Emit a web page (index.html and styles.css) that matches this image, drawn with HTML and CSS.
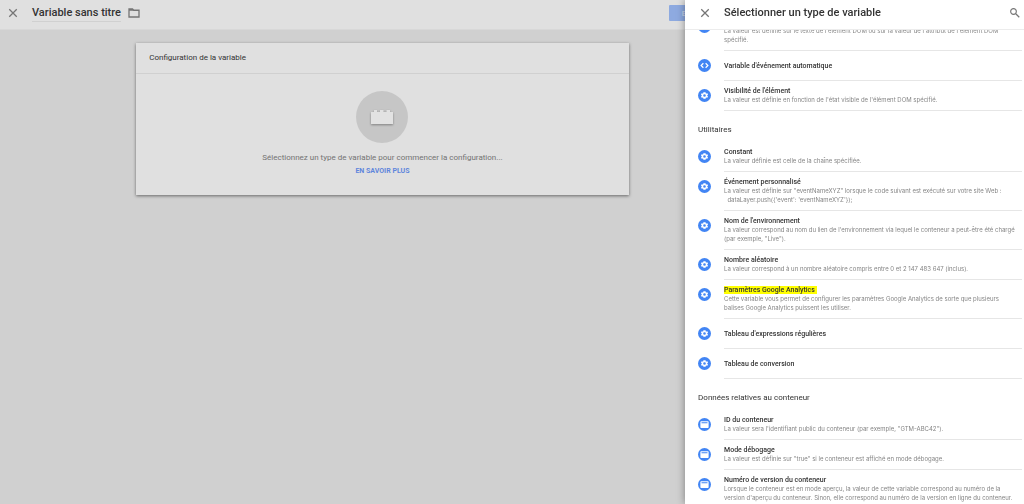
FILE: index.html
```html
<!DOCTYPE html>
<html lang="fr">
<head>
<meta charset="utf-8">
<title>Variable sans titre</title>
<link rel="stylesheet" href="styles.css">
</head>
<body>
<svg class="sprite" aria-hidden="true">
  <symbol id="close" viewBox="0 0 24 24"><path d="M3 3L21 21M21 3L3 21" fill="none" stroke="currentColor" stroke-width="3"/></symbol>
  <symbol id="gear" viewBox="0 0 24 24"><path fill="currentColor" fill-rule="evenodd" d="M19.4 13c.1-.7.1-1.300 0-2l2.100-1.600-2-3.500-2.500 1a8 8 0 0 0-1.700-1L15 3.200H9l-.4 2.700a8 8 0 0 0-1.700 1l-2.400-1-2 3.500L4.600 11a8 8 0 0 0 0 2l-2.100 1.600 2 3.500 2.400-1a8 8 0 0 0 1.700 1l.4 2.700h6l.3-2.700a8 8 0 0 0 1.700-1l2.500 1 2-3.500zM12 15.500a3.500 3.500 0 1 1 0-7 3.500 3.500 0 0 1 0 7z"/></symbol>
  <symbol id="code" viewBox="0 0 24 24"><path d="M9 6L3 12 9 18M15 6l6 6-6 6" fill="none" stroke="currentColor" stroke-width="3.200"/></symbol>
  <symbol id="box" viewBox="0 0 24 24"><path fill="currentColor" fill-rule="evenodd" d="M3 3H21A2 2 0 0 1 23 5V19A2 2 0 0 1 21 21H3A2 2 0 0 1 1 19V5A2 2 0 0 1 3 3zM4 6V8.500H20V6z"/></symbol>
</svg>

<div class="page">
  <header class="topbar">
    <button class="icon-button" aria-label="Fermer"><svg><use href="#close"/></svg></button>
    <h1 class="topbar-title">Variable sans titre</h1>
    <button class="folder-button" aria-label="Dossier"><svg viewBox="0 0 24 20"><path d="M2 2H9L11.500 4.500H22V18H2z" fill="none" stroke="currentColor" stroke-width="2.600"/><path d="M2 2H9L12 5.500H2z" fill="currentColor"/></svg></button>
    <button class="save">Enregistrer</button>
  </header>
  <main class="workspace">
    <section class="card">
      <h2 class="card-title">Configuration de la variable</h2>
      <div class="card-body">
        <div class="brick"><svg viewBox="0 0 22 14"><path d="M0 2H3V0H6V2H9V0H12.500V2H15.500V0H19V2H22V14H0z" fill="currentColor"/></svg></div>
        <p class="hint">Sélectionnez un type de variable pour commencer la configuration...</p>
        <a class="more" href="#">EN SAVOIR PLUS</a>
      </div>
    </section>
  </main>
</div>

<aside class="drawer">
  <header class="drawer-head">
    <button class="icon-button" aria-label="Fermer le panneau"><svg><use href="#close"/></svg></button>
    <h2 class="drawer-title">Sélectionner un type de variable</h2>
    <button class="search-button" aria-label="Rechercher"><svg viewBox="2 2 20 20"><circle cx="9" cy="9" r="5.700" fill="none" stroke="currentColor" stroke-width="2.200"/><path d="M13.500 13.500L20.500 20.500" stroke="currentColor" stroke-width="2.600"/></svg></button>
  </header>
  <div class="drawer-view">
    <div class="list">
      <div class="row row-clipped"><span class="badge"></span><div class="text"><p>La valeur est définie sur le texte de l'élément DOM ou sur la valeur de l'attribut de l'élément DOM spécifié.</p></div></div>
      <div class="row row-plain"><span class="badge"><svg><use href="#code"/></svg></span><div class="text"><h4>Variable d'événement automatique</h4></div></div>
      <div class="row"><span class="badge"><svg><use href="#gear"/></svg></span><div class="text"><h4>Visibilité de l'élément</h4><p>La valeur est définie en fonction de l'état visible de l'élément DOM spécifié.</p></div></div>

      <h3 class="group">Utilitaires</h3>
      <div class="row"><span class="badge"><svg><use href="#gear"/></svg></span><div class="text"><h4>Constant</h4><p>La valeur définie est celle de la chaîne spécifiée.</p></div></div>
      <div class="row"><span class="badge"><svg><use href="#gear"/></svg></span><div class="text"><h4>Événement personnalisé</h4><p>La valeur est définie sur "eventNameXYZ" lorsque le code suivant est exécuté sur votre site Web :<br>&nbsp; dataLayer.push({'event': 'eventNameXYZ'});</p></div></div>
      <div class="row"><span class="badge"><svg><use href="#gear"/></svg></span><div class="text"><h4>Nom de l'environnement</h4><p>La valeur correspond au nom du lien de l'environnement via lequel le conteneur a peut-être été chargé (par&nbsp;exemple, "Live").</p></div></div>
      <div class="row"><span class="badge"><svg><use href="#gear"/></svg></span><div class="text"><h4>Nombre aléatoire</h4><p>La valeur correspond à un nombre aléatoire compris entre 0 et 2 147 483 647 (inclus).</p></div></div>
      <div class="row"><span class="badge"><svg><use href="#gear"/></svg></span><div class="text"><h4><mark>Paramètres Google Analytics</mark></h4><p>Cette variable vous permet de configurer les paramètres Google Analytics de sorte que plusieurs balises&nbsp;Google Analytics puissent les utiliser.</p></div></div>
      <div class="row row-plain"><span class="badge"><svg><use href="#gear"/></svg></span><div class="text"><h4>Tableau d'expressions régulières</h4></div></div>
      <div class="row row-plain"><span class="badge"><svg><use href="#gear"/></svg></span><div class="text"><h4>Tableau de conversion</h4></div></div>

      <h3 class="group">Données relatives au conteneur</h3>
      <div class="row"><span class="badge"><svg><use href="#box"/></svg></span><div class="text"><h4>ID du conteneur</h4><p>La valeur sera l'identifiant public du conteneur (par exemple, "GTM-ABC42").</p></div></div>
      <div class="row"><span class="badge"><svg><use href="#box"/></svg></span><div class="text"><h4>Mode débogage</h4><p>La valeur est définie sur "true" si le conteneur est affiché en mode débogage.</p></div></div>
      <div class="row"><span class="badge"><svg><use href="#box"/></svg></span><div class="text"><h4>Numéro de version du conteneur</h4><p>Lorsque le conteneur est en mode aperçu, la valeur de cette variable correspond au numéro de la version&nbsp;d'aperçu du conteneur. Sinon, elle correspond au numéro de la version en ligne du conteneur.</p></div></div>
    </div>
  </div>
</aside>
</body>
</html>
```
FILE: styles.css
```css
* { box-sizing: border-box; margin: 0; padding: 0; }
body { font-family: Roboto, "Liberation Sans", sans-serif; background: #d0d0d0; color: #333; overflow: hidden; }
button { border: 0; background: none; font: inherit; color: #757575; }
svg { display: block; }
.sprite { position: absolute; width: 0; height: 0; }

.page { min-height: 100vh; }
.topbar { display: flex; align-items: center; height: 30px; background: #e0e0e0; border-bottom: 1px solid #d8d8d8; padding: 0 0 3px 8px; }
.icon-button { width: 10px; height: 10px; flex: none; }
.icon-button svg { width: 10px; height: 10px; }
.topbar-title { margin: 0 7px 0 14px; padding-top: 1px; font-size: 11px; line-height: 16px; font-weight: 500; border-bottom: 1px solid #d0d0d0; flex: none; }
.folder-button svg { width: 12px; height: 10px; }
.save { margin-left: auto; margin-right: 27%; height: 16px; padding: 0 0 0 13px; width: 81px; text-align: left; font-size: 8px; font-weight: 500; color: #c8d4ea; background: #8eaae0; border-radius: 1px; }

.workspace { padding-top: 13px; }
.card { width: 48.1%; margin-left: 13.3%; background: #e0e0e0; box-shadow: 0 1px 3px rgba(0,0,0,.5); }
.card-title { height: 31px; padding: 0 13px; font-size: 8px; line-height: 30px; font-weight: 400; border-bottom: 1px solid #d0d0d0; }
.card-body { display: flex; flex-direction: column; align-items: center; padding: 17px 0 18px; }
.brick { display: flex; align-items: center; justify-content: center; width: 52px; height: 52px; border-radius: 50%; background: #c6c6c6; color: #e2e2e2; }
.brick svg { width: 22px; height: 14px; filter: drop-shadow(0 1px 1px rgba(0,0,0,.35)); }
.hint { margin-top: 8px; font-size: 8px; line-height: 14px; color: #737373; }
.more { font-size: 7px; line-height: 12px; font-weight: 700; color: #5f86dc; text-decoration: none; }

.drawer { position: fixed; top: 0; right: 0; bottom: 0; width: 33.1%; background: #fff; box-shadow: 0 0 8px rgba(0,0,0,.4); display: flex; flex-direction: column; }
.drawer-head { display: flex; align-items: center; flex: none; height: 30px; padding: 0 4px 3px 15px; border-bottom: 1px solid #ececec; }
.drawer-title { flex: 1; margin-left: 14px; font-size: 11px; line-height: 16px; font-weight: 500; }
.search-button svg { width: 10px; height: 10px; }
.drawer-view { flex: 1; min-height: 0; overflow: hidden; }
.list { margin-top: -18px; padding: 0 2px 0 13px; }
.row { display: grid; grid-template-columns: 13px 1fr; column-gap: 13px; }
.badge { display: flex; align-items: center; justify-content: center; width: 13px; height: 13px; margin-top: 8px; border-radius: 50%; background: #4285f4; color: #fff; }
.badge svg { width: 9px; height: 9px; }
.text { padding: 6px 0; border-bottom: 1px solid #e6e6e6; }
.row-clipped .text { padding-top: 14px; }
.row-plain .text { padding: 11px 0 10px; }
h4 { font-size: 7px; line-height: 8px; font-weight: 500; }
.text p { font-family: Inter, Roboto, sans-serif; font-size: 6px; line-height: 9px; color: #858585; }
.group { height: 31px; padding-top: 12px; font-size: 8px; line-height: 13px; font-weight: 400; }
mark { background: #ff0; color: inherit; padding: 0 2px 0 0; }
```
